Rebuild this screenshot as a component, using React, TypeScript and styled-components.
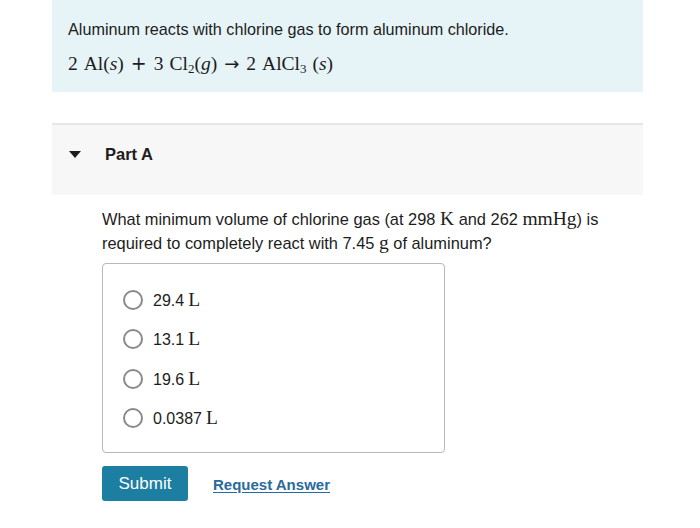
import * as React from 'react'
import styled, {createGlobalStyle} from 'styled-components'

const GlobalStyle = createGlobalStyle`
  body {
    margin: 0;
    background: #ffffff;
    font-family: "Liberation Sans", Arial, sans-serif;
    color: #1d1d1d;
  }
`

const Page = styled.div`
  width: 700px;
  height: 528px;
  overflow: hidden;
`

const Column = styled.div`
  width: 591px;
  margin-left: 52px;
`

const Intro = styled.div`
  background: #e7f4f7;
  padding: 19px 16px 16px 16px;
  height: 92px;
  box-sizing: border-box;
`

const IntroText = styled.p`
  margin: 0;
  font-size: 16.2px;
  line-height: 20px;
`

const Equation = styled.div`
  margin-top: 12px;
  font-family: "Liberation Serif", "DejaVu Serif", serif;
  font-size: 19.5px;
  line-height: 24px;
  display: flex;
  align-items: baseline;
  i {
    font-style: italic;
  }
  sub {
    font-size: 13px;
    vertical-align: -3px;
    line-height: 0;
  }
`

const Op = styled.span<{wide?: boolean}>`
  font-family: "DejaVu Sans", sans-serif;
  font-size: ${(p): string => p.wide ? '18px' : '19px'};
  margin: 0 ${(p): string => p.wide ? '7px' : '7px'};
`

const Gap = styled.span`
  width: 6px;
`

const Serif = styled.span`
  font-family: "Liberation Serif", "DejaVu Serif", serif;
  font-size: 19.5px;
  line-height: 1;
`

const PartHeader = styled.div`
  margin-top: 31px;
  border-top: 2px solid #e6e6e6;
  background: #f7f7f7;
  height: 72px;
  display: flex;
  align-items: flex-start;
  padding: 19px 0 0 17px;
  box-sizing: border-box;
`

const Caret = styled.span`
  width: 0;
  height: 0;
  border-left: 6px solid transparent;
  border-right: 6px solid transparent;
  border-top: 7px solid #1d1d1d;
  margin: 7px 24px 0 0;
`

const PartTitle = styled.h2`
  margin: 0;
  font-size: 16.5px;
  line-height: 20px;
  font-weight: 700;
`

const Body = styled.div`
  padding: 12px 0 0 50px;
`

const Question = styled.p`
  margin: 0;
  font-size: 16.4px;
  line-height: 24px;
  width: 520px;
`

const Choices = styled.div`
  margin-top: 8px;
  width: 343px;
  height: 190px;
  box-sizing: border-box;
  border: 1px solid #b8b8b8;
  border-radius: 4px;
  padding: 26px 0 0 20px;
  display: flex;
  flex-direction: column;
  gap: 19.4px;
`

const Choice = styled.label`
  display: flex;
  align-items: center;
  font-size: 16px;
  height: 20px;
  gap: 10px;
`

const Circle = styled.span`
  width: 16px;
  height: 16px;
  border: 2px solid #8a8a8a;
  border-radius: 50%;
  background: #fff;
`

const Unit = styled.span`
  font-family: "Liberation Serif", serif;
  font-size: 19.5px;
  margin-left: 4px;
`

const Actions = styled.div`
  margin-top: 13px;
  display: flex;
  align-items: center;
  gap: 25px;
`

const SubmitButton = styled.button`
  width: 86px;
  height: 35px;
  background: #1c7ea1;
  color: #ffffff;
  border: none;
  border-radius: 3px;
  font-family: "Liberation Sans", Arial, sans-serif;
  font-size: 17px;
`

const RequestLink = styled.a`
  color: #2a6a9c;
  font-weight: 700;
  font-size: 15px;
  margin-top: 2px;
  text-decoration: underline;
  text-underline-offset: 2px;
`

const answers = ['29.4', '13.1', '19.6', '0.0387']

export default function App(): JSX.Element {
  return (
    <Page>
      <GlobalStyle />
      <Column>
        <Intro>
          <IntroText>Aluminum reacts with chlorine gas to form aluminum chloride.</IntroText>
          <Equation>
            <span>2</span><Gap /><span>Al(<i>s</i>)</span>
            <Op>+</Op>
            <span>3</span><Gap /><span>Cl<sub>2</sub>(<i>g</i>)</span>
            <Op wide>→</Op>
            <span>2</span><Gap /><span>AlCl<sub>3</sub></span><Gap /><span>(<i>s</i>)</span>
          </Equation>
        </Intro>
        <PartHeader>
          <Caret />
          <PartTitle>Part A</PartTitle>
        </PartHeader>
        <Body>
          <Question>
            What minimum volume of chlorine gas (at 298 <Serif>K</Serif> and 262 <Serif>mmHg</Serif>) is
            required to completely react with 7.45 <Serif>g</Serif> of aluminum?
          </Question>
          <Choices>
            {answers.map((a) => (
              <Choice key={a}>
                <Circle />
                <span>{a}<Unit>L</Unit></span>
              </Choice>
            ))}
          </Choices>
          <Actions>
            <SubmitButton>Submit</SubmitButton>
            <RequestLink href="#">Request Answer</RequestLink>
          </Actions>
        </Body>
      </Column>
    </Page>
  )
}
